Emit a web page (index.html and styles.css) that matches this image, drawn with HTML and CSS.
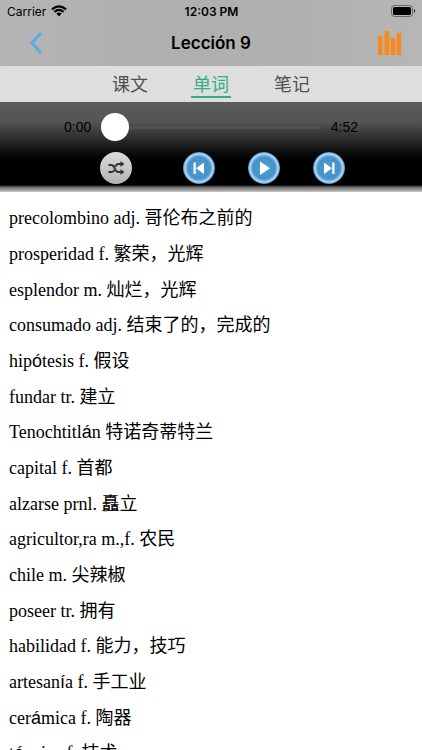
FILE: index.html
```html
<!DOCTYPE html>
<html lang="zh-CN">
<head>
  <meta charset="UTF-8">
  <meta name="viewport" content="width=device-width, initial-scale=1.0">
  <title>Lección 9</title>
  <link rel="stylesheet" href="styles.css">
</head>
<body>
  <header class="header">
    <div class="status-bar">
      <div class="carrier">
        <span>Carrier</span>
        <svg class="wifi" viewBox="0 0 16 12">
          <path d="M1 4.4 Q8 -1.8 15 4.4" />
          <path d="M3.4 7 Q8 2.9 12.6 7" />
          <path class="wifi-dot" d="M5.3 8.6 Q8 6.6 10.7 8.6 L8 11.4 Z" />
        </svg>
      </div>
      <span class="clock">12:03 PM</span>
      <svg class="battery" viewBox="0 0 25 12">
        <rect class="battery-case" x="0.5" y="0.5" width="21" height="11" rx="3" />
        <rect x="2" y="2" width="18" height="8" rx="1.6" />
        <path d="M23 4 Q25 6 23 8 Z" />
      </svg>
    </div>
    <nav class="nav-bar">
      <button class="nav-button" type="button" aria-label="返回">
        <svg class="back-icon" viewBox="0 0 14 22"><path d="M12 1 L3 11 L12 21" /></svg>
      </button>
      <h1>Lección 9</h1>
      <button class="nav-button nav-right" type="button" aria-label="播放列表">
        <svg class="bars-icon" viewBox="0 0 24 26">
          <path d="M0 6h4.6v19h-4.6z M6.6 1h4.6v24h-4.6z M12.6 8h4.6v17h-4.6z M18.6 3h4.6v22h-4.6z" />
        </svg>
      </button>
    </nav>
  </header>

  <div class="tabs" role="tablist">
    <button class="tab" type="button" role="tab" aria-selected="false">课文</button>
    <button class="tab active" type="button" role="tab" aria-selected="true">单词</button>
    <button class="tab" type="button" role="tab" aria-selected="false">笔记</button>
  </div>

  <section class="player">
    <div class="progress">
      <span>0:00</span>
      <input class="seek" type="range" min="0" max="292" value="0" aria-label="播放进度">
      <span>4:52</span>
    </div>
    <div class="controls">
      <button class="control shuffle" type="button" aria-label="随机播放">
        <svg viewBox="0 0 32 32">
          <path class="line" d="M8.5 13 H11.5 C15.5 13 14 20 18 20 H21 M8.5 20 H11.5 C13.2 20 13.9 19 14.3 18 M15.4 14.8 C16 13 16.6 12 18.4 12 H21" />
          <path d="M20.5 9 L24.5 12 L20.5 15 Z M20.5 17 L24.5 20 L20.5 23 Z" />
        </svg>
      </button>
      <button class="control" type="button" aria-label="上一个">
        <svg viewBox="0 0 32 32"><path d="M10.5 10.5 H12.7 V22 H10.5 Z M21 10.5 V22 L13.2 16.2 Z" /></svg>
      </button>
      <button class="control" type="button" aria-label="播放">
        <svg viewBox="0 0 32 32"><path d="M12 9.5 L22 16.2 L12 23 Z" /></svg>
      </button>
      <button class="control" type="button" aria-label="下一个">
        <svg viewBox="0 0 32 32"><path d="M11 10.5 L18.8 16.2 L11 22 Z M19.3 10.5 H21.5 V22 H19.3 Z" /></svg>
      </button>
    </div>
  </section>

  <main>
    <ul class="words">
      <li>precolombino adj. 哥伦布之前的</li>
      <li>prosperidad f. 繁荣，光辉</li>
      <li>esplendor m. 灿烂，光辉</li>
      <li>consumado adj. 结束了的，完成的</li>
      <li>hip<span class="accent">ó</span>tesis f. 假设</li>
      <li>fundar tr. 建立</li>
      <li>Tenochtitl<span class="accent">á</span>n 特诺奇蒂特兰</li>
      <li>capital f. 首都</li>
      <li>alzarse prnl. 矗立</li>
      <li>agricultor,ra m.,f. 农民</li>
      <li>chile m. 尖辣椒</li>
      <li>poseer tr. 拥有</li>
      <li>habilidad f. 能力，技巧</li>
      <li>artesan<span class="accent">í</span>a f. 手工业</li>
      <li>cer<span class="accent">á</span>mica f. 陶器</li>
      <li>t<span class="accent">é</span>cnica f. 技术</li>
    </ul>
  </main>
</body>
</html>
```

FILE: styles.css
```css
* {
  box-sizing: border-box;
}

body {
  margin: 0;
  height: 100vh;
  display: flex;
  flex-direction: column;
  overflow: hidden;
  background: #fff;
  color: #000;
  font-family: Inter, 'Liberation Sans', 'Noto Sans CJK SC', sans-serif;
}

button {
  margin: 0;
  padding: 0;
  border: 0;
  background: none;
  font: inherit;
  color: inherit;
}

svg {
  display: block;
}

/* header */
.header {
  flex: none;
  background: linear-gradient(90deg, #b5b5b5, #afafaf 30%, #b0b0b0 70%, #b6b6b6);
}

.status-bar {
  display: grid;
  grid-template-columns: 1fr auto 1fr;
  align-items: center;
  height: 22px;
  padding: 0 6px 0 7px;
  font-size: 12px;
}

.carrier {
  display: flex;
  align-items: center;
  gap: 5px;
}

.wifi {
  width: 16px;
  height: 12px;
  fill: none;
  stroke: #000;
  stroke-width: 2.2;
}

.wifi-dot {
  fill: #000;
  stroke: none;
}

.clock {
  font-weight: 600;
}

.battery {
  width: 25px;
  height: 12px;
  justify-self: end;
}

.battery-case {
  fill: none;
  stroke: #666;
}

.nav-bar {
  display: grid;
  grid-template-columns: 1fr auto 1fr;
  align-items: center;
  height: 42px;
  margin-bottom: 2px;
  padding: 0 20px 0 29px;
}

.nav-bar h1 {
  margin: 0;
  font-size: 17px;
  font-weight: 600;
  padding-right: 9px;
}

.nav-button {
  justify-self: start;
}

.nav-right {
  justify-self: end;
}

.back-icon {
  width: 14px;
  height: 22px;
  fill: none;
  stroke: #55ace6;
  stroke-width: 3;
}

.bars-icon {
  width: 24px;
  height: 26px;
  fill: #f78a1d;
}

/* tabs */
.tabs {
  flex: none;
  display: flex;
  justify-content: center;
  gap: 41px;
  height: 36px;
  background: #dedede;
  font-family: 'Noto Sans CJK SC', sans-serif;
  font-size: 18px;
  color: #505050;
}

.tab {
  width: 40px;
  height: 32px;
  padding-top: 4px;
  white-space: nowrap;
  border-bottom: 2px solid transparent;
}

.tab.active {
  color: #2fae88;
  border-color: #2fae88;
}

/* player */
.player {
  flex: none;
  height: 90px;
  padding-top: 11px;
  background: linear-gradient(#5c5c5c, #545454 20px, #303030 35px, #0a0a0a 52px, #000 60px, #000 83px, #666 85px, #c8c8c8 90px);
}

.progress {
  display: flex;
  align-items: center;
  gap: 10px;
  height: 28px;
  padding: 0 64px;
  font-family: 'Liberation Sans', sans-serif;
  font-size: 14px;
}

.seek {
  flex: 1;
  min-width: 0;
  height: 28px;
  margin: 0;
  appearance: none;
  background: linear-gradient(#525254, #525254) center / 100% 3px no-repeat;
}

.seek::-webkit-slider-thumb {
  appearance: none;
  width: 28px;
  height: 28px;
  border-radius: 50%;
  background: #fff;
}

.controls {
  display: flex;
  gap: 33px;
  padding: 11px 0 0 100px;
}

.control {
  width: 32px;
  height: 32px;
  border-radius: 50%;
  background: radial-gradient(circle, #4e9fd0 0, #4592c6 48%, #7fbde6 58%, #bfe0f8 62%, #4a86b8 70%);
}

.control svg {
  width: 32px;
  height: 32px;
  fill: #fff;
}

.shuffle {
  margin-right: 18px;
  background: linear-gradient(#dcdcdc, #b4b4b4);
}

.shuffle svg {
  fill: #333;
}

.shuffle .line {
  fill: none;
  stroke: #333;
  stroke-width: 2;
}

/* word list */
.words {
  margin: 0;
  padding: 8px 9px;
  list-style: none;
  font-family: 'Liberation Serif', 'Noto Sans CJK SC', serif;
  font-size: 18px;
  line-height: 36px;
}

.words li {
  height: 36px;
}

.words li:nth-child(3n) {
  height: 35px;
}

.accent {
  font-family: 'Liberation Sans', sans-serif;
}
```
